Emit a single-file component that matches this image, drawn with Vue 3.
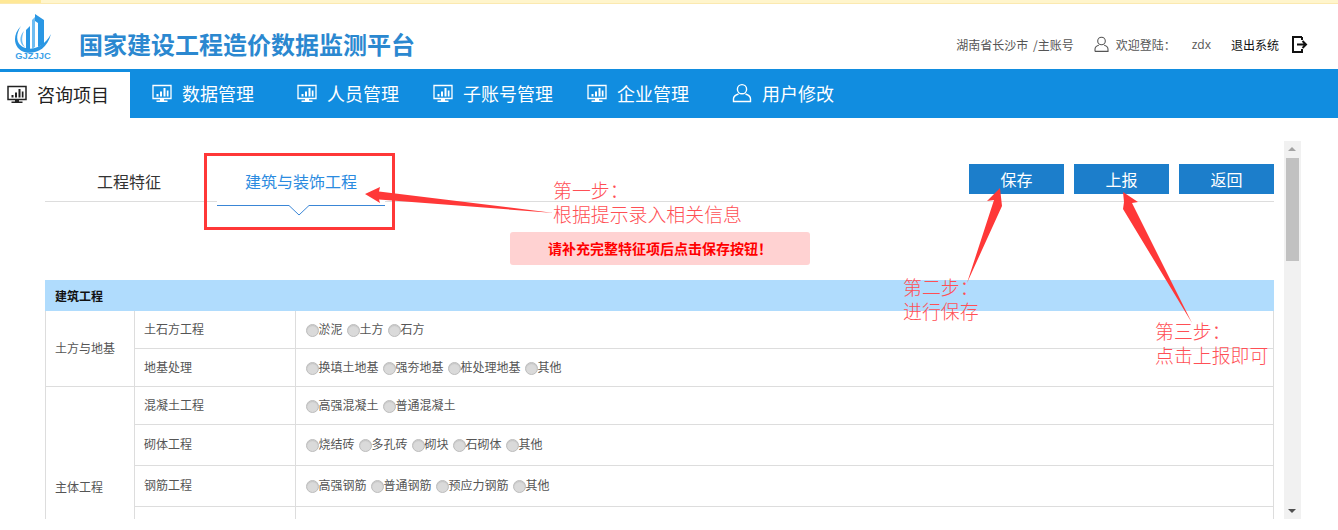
<script setup>
const navItems = [
  { label: '数据管理', icon: 'monitor', wide: true },
  { label: '人员管理', icon: 'monitor' },
  { label: '子账号管理', icon: 'monitor' },
  { label: '企业管理', icon: 'monitor', wide: true },
  { label: '用户修改', icon: 'user' }
]
const groups = [
  {
    name: '土方与地基',
    rows: [
      { title: '土石方工程', h: 38, options: ['淤泥', '土方', '石方'] },
      { title: '地基处理', h: 38, options: ['换填土地基', '强夯地基', '桩处理地基', '其他'] }
    ]
  },
  {
    name: '主体工程',
    rows: [
      { title: '混凝土工程', h: 38, options: ['高强混凝土', '普通混凝土'] },
      { title: '砌体工程', h: 41, options: ['烧结砖', '多孔砖', '砌块', '石砌体', '其他'] },
      { title: '钢筋工程', h: 41, options: ['高强钢筋', '普通钢筋', '预应力钢筋', '其他'] },
      { title: '', h: 82, options: [] }
    ]
  }
]
</script>

<template>
  <div class="page">
    <div class="strip"><div class="strip-left"></div></div>

    <header class="header">
      <svg class="logo" width="38" height="46" viewBox="0 0 38 46">
        <path d="M21 1 L30 7 V31 L24 34 V10 L21 8Z" fill="#2a97e4" />
        <path d="M18 7 L21 4 V34 L18 36Z" fill="#6fbdf2" />
        <path d="M12 17 L16 13 V36 H12Z" fill="#2a97e4" />
        <path d="M7 13 C0 24 3 33 13 35.5 C21 37 31 32 37 21 C33 37 21 41 12 39.5 C0 37 -3 23 7 13Z" fill="#2a97e4" />
        <path d="M10 18 C7 25 8 31 11 34 C5 31 5 23 10 18Z" fill="#6fbdf2" />
        <text x="19" y="45.5" text-anchor="middle" class="logo-text">GJZJJC</text>
      </svg>
      <h1 class="title">国家建设工程造价数据监测平台</h1>
      <div class="account">
        <span class="city">湖南省长沙市 /主账号</span>
        <svg class="u-icon" width="15" height="16" viewBox="0 0 15 16" fill="none" stroke="#555" stroke-width="1.1">
          <circle cx="7.5" cy="5" r="3.8" />
          <path d="M1 15.4 V13.2 C1 11 3 9.8 4.8 9.3 M10.2 9.3 C12 9.8 14 11 14 13.2 V15.4 H1" />
        </svg>
        <span class="welcome">欢迎登陆：</span>
        <span class="name">zdx</span>
        <span class="logout">退出系统</span>
        <svg class="logout-icon" width="16" height="17" viewBox="0 0 16 17" fill="none" stroke="#111" stroke-width="2">
          <path d="M10 1 H1 V16 H10 V13 M10 4 V1" />
          <path d="M5 8.5 H14 M10.5 5 L14 8.5 L10.5 12" />
        </svg>
      </div>
    </header>

    <nav class="nav">
      <a class="nav-active">
        <svg class="nav-icon" width="20" height="20" viewBox="0 0 20 20">
          <path d="M1 2.5 H19 V15.5 H1Z" fill="none" stroke="#222" stroke-width="1.5" />
          <path d="M4.5 11 h2 v2.5 h-2z M8 8.5 h2 v5 h-2z M11.5 5 h2 v8.5 h-2z M14.8 7.5 h1.7 v6 h-1.7z" fill="#222" />
          <path d="M8 16 h4 v1.5 h-4z M4.5 17.5 H15.5 V19 H4.5Z" fill="#222" />
        </svg>
        <span>咨询项目</span>
      </a>
      <a v-for="item in navItems" :key="item.label" class="nav-item" :class="{ wide: item.wide }">
        <svg v-if="item.icon === 'monitor'" class="nav-icon" width="20" height="20" viewBox="0 0 20 20">
          <path d="M1 2.5 H19 V15.5 H1Z" fill="none" stroke="#fff" stroke-width="1.3" />
          <path d="M4.5 11 h2 v2.5 h-2z M8 8.5 h2 v5 h-2z M11.5 5 h2 v8.5 h-2z M14.8 7.5 h1.7 v6 h-1.7z" fill="#fff" />
          <path d="M8 16 h4 v1.5 h-4z M4.5 17.5 H15.5 V19 H4.5Z" fill="#fff" />
        </svg>
        <svg v-else class="nav-icon" width="20" height="20" viewBox="0 0 20 20" fill="none" stroke="#fff" stroke-width="1.4">
          <circle cx="10" cy="6.2" r="4.6" />
          <path d="M6.5 11 C3.5 12 1.5 13.5 1.5 15.8 V18.5 H18.5 V15.8 C18.5 13.5 16.5 12 13.5 11" />
        </svg>
        <span>{{ item.label }}</span>
      </a>
    </nav>

    <main class="main">
      <div class="content">
        <div class="tabs-bar">
          <div class="tabs">
            <span class="tab">工程特征</span>
            <span class="tab tab-active">建筑与装饰工程</span>
          </div>
          <div class="actions">
            <button class="btn">保存</button>
            <button class="btn">上报</button>
            <button class="btn">返回</button>
          </div>
          <svg class="tab-mark" width="168" height="12" viewBox="0 0 168 12">
            <path d="M0 0.5 H72 L82 10 L92 0.5 H168" fill="none" stroke="#3a86d6" stroke-width="1" />
          </svg>
        </div>

        <div class="notice">请补充完整特征项后点击保存按钮！</div>

        <table class="spec">
          <colgroup>
            <col class="c1" />
            <col class="c2" />
            <col />
          </colgroup>
          <thead>
            <tr><th colspan="3">建筑工程</th></tr>
          </thead>
          <tbody>
            <template v-for="group in groups" :key="group.name">
              <tr v-for="(row, i) in group.rows" :key="row.title + i" :class="{ tall: row.h === 41 }" :style="{ height: row.h + 'px' }">
                <td v-if="i === 0" :rowspan="group.rows.length" class="g-name">{{ group.name }}</td>
                <td class="r-title">{{ row.title }}</td>
                <td class="r-options">
                  <span v-for="o in row.options" :key="o" class="opt"><i class="radio"></i>{{ o }}</span>
                </td>
              </tr>
            </template>
          </tbody>
        </table>
      </div>

      <div class="scrollbar">
        <span class="arrow up"></span>
        <span class="thumb"></span>
        <span class="arrow down"></span>
      </div>
    </main>

    <div class="overlay">
      <div class="box"></div>
      <svg class="arrows" width="1338" height="530" viewBox="0 0 1338 530">
        <polygon points="365,194 380,187 379,191.5 554,213 379,199.5 380,203" fill="#ff3838" />
        <polygon points="1000,188 987,201 994,200 967,283 1002,206" fill="#ff3838" />
        <polygon points="1123,192 1138,202 1132,203 1192,323 1123,209 1124,202" fill="#ff3838" />
      </svg>
      <div class="note n1">第一步：<br />根据提示录入相关信息</div>
      <div class="note n2">第二步：<br />进行保存</div>
      <div class="note n3">第三步：<br />点击上报即可</div>
    </div>
  </div>
</template>

<style>
html, body { margin: 0; background: #fff; overflow: hidden; }
</style>

<style scoped>
.page {
  position: relative;
  width: 1338px;
  height: 530px;
  overflow: hidden;
  font-family: "Noto Sans CJK SC", "Noto Sans", sans-serif;
  color: #444;
  background: #fff;
}
.strip { height: 3px; background: #fff5cc; border-bottom: 1px solid #fbe9b0; }
.strip-left { width: 41px; height: 3px; background: #ffe896; }

.header { position: relative; height: 65px; display: flex; align-items: flex-start; }
.logo { margin: 9px 0 0 14px; flex: none; }
.logo-text { font: 700 9.4px "Liberation Sans", sans-serif; fill: #3ba1e8; }
.title {
  margin: 23px 0 0 27px;
  font-size: 24px;
  line-height: 33px;
  font-weight: 700;
  color: #2b88d0;
  white-space: nowrap;
}
.account {
  margin-left: auto;
  margin-top: 31px;
  margin-right: 30px;
  display: flex;
  align-items: center;
  height: 18px;
  font-size: 12px;
  color: #555;
  white-space: nowrap;
}
.city { word-spacing: 2px; }
.u-icon { margin-left: 20px; margin-right: 7px; }
.name { margin-left: 16px; font-family: "Open Sans", sans-serif; font-size: 12px; }
.logout { margin-left: 20px; color: #111; }
.logout-icon { margin-left: 13px; }

.nav { display: flex; height: 49px; background: #118de0; font-size: 18px; color: #fff; }
.nav a { display: flex; align-items: center; white-space: nowrap; }
.nav-active {
  width: 130px;
  box-sizing: border-box;
  margin-top: 3px;
  padding: 0 0 3px 7px;
  background: #fff;
  color: #222;
}
.nav-icon { flex: none; margin-right: 10px; }
.nav-active + .nav-item { margin-left: 22px; }
.nav-item { margin-right: 34px; padding-bottom: 2px; }
.nav-item.wide { margin-right: 43px; }

.main { display: flex; height: 401px; overflow: hidden; }
.content { width: 1229px; margin-left: 45px; flex: none; }

.tabs-bar {
  position: relative;
  height: 84px;
  box-sizing: border-box;
  border-bottom: 1px solid #ddd;
  display: flex;
  justify-content: space-between;
}
.tabs { display: flex; padding: 51px 0 0 52px; font-size: 16px; line-height: 24px; color: #333; }
.tab-active { margin-left: 84px; color: #2b8be0; }
.actions { display: flex; gap: 10px; padding-top: 46px; }
.btn {
  width: 95px;
  height: 30px;
  padding: 0;
  border: 0;
  background: #1c7ecb;
  color: #fff;
  font: 16px/30px "Noto Sans CJK SC", sans-serif;
}
.tab-mark { position: absolute; left: 172px; top: 87px; }
.tabs-bar::after {
  content: "";
  position: absolute;
  left: 172px;
  bottom: -1px;
  width: 168px;
  height: 1px;
  background: #fff;
}

.notice {
  width: 300px;
  height: 33px;
  margin: 30px 0 0 465px;
  background: #ffd2d2;
  border-radius: 3px;
  color: #f00;
  font-size: 14px;
  line-height: 33px;
  font-weight: 700;
  text-align: center;
}

.spec {
  width: 1229px;
  margin-top: 15px;
  border-collapse: collapse;
  table-layout: fixed;
  font-size: 12px;
  color: #555;
}
.c1 { width: 89px; }
.c2 { width: 161px; }
.spec th {
  height: 29px;
  padding: 0 0 0 9px;
  border: 1px solid #b0dcfd;
  background: #b0dcfd;
  color: #111;
  font-size: 12px;
  font-weight: 700;
  text-align: left;
}
.spec td { padding: 0 0 2px; border: 1px solid #ddd; white-space: nowrap; }
.spec .tall td { padding-bottom: 4px; }
.spec .g-name { padding-left: 9px; padding-bottom: 2px; }
.spec .r-title { padding-left: 9px; }
.spec .r-options { padding-left: 10px; }
.opt { margin-right: 4.5px; }
.radio {
  display: inline-block;
  box-sizing: border-box;
  width: 13px;
  height: 13px;
  margin-right: -0.5px;
  vertical-align: -3px;
  border-radius: 50%;
  border: 1px solid #bdbdbd;
  background: #dadada;
  box-shadow: inset 0 1px 1px #c4c4c4;
}

.scrollbar {
  position: relative;
  margin: 23px 0 0 10px;
  width: 17px;
  height: 378px;
  background: #f1f1f1;
  flex: none;
}
.thumb { position: absolute; left: 2px; top: 17px; width: 13px; height: 103px; background: #c1c1c1; }
.arrow { position: absolute; left: 4px; width: 0; height: 0; border-left: 4px solid transparent; border-right: 4px solid transparent; }
.arrow.up { top: 6px; border-bottom: 4px solid #a3a3a3; }
.arrow.down { bottom: 6px; border-top: 4px solid #505050; }

.overlay { position: absolute; inset: 0; pointer-events: none; }
.box { position: absolute; left: 204px; top: 153px; width: 191px; height: 77px; box-sizing: border-box; border: 3px solid #ff3838; }
.arrows { position: absolute; left: 0; top: 0; }
.note {
  position: absolute;
  font-size: 18.9px;
  line-height: 24px;
  color: #ff4f55;
  font-weight: 300;
  white-space: nowrap;
}
.n1 { left: 553px; top: 178px; }
.n2 { left: 903px; top: 275px; }
.n3 { left: 1155px; top: 319px; }
</style>
